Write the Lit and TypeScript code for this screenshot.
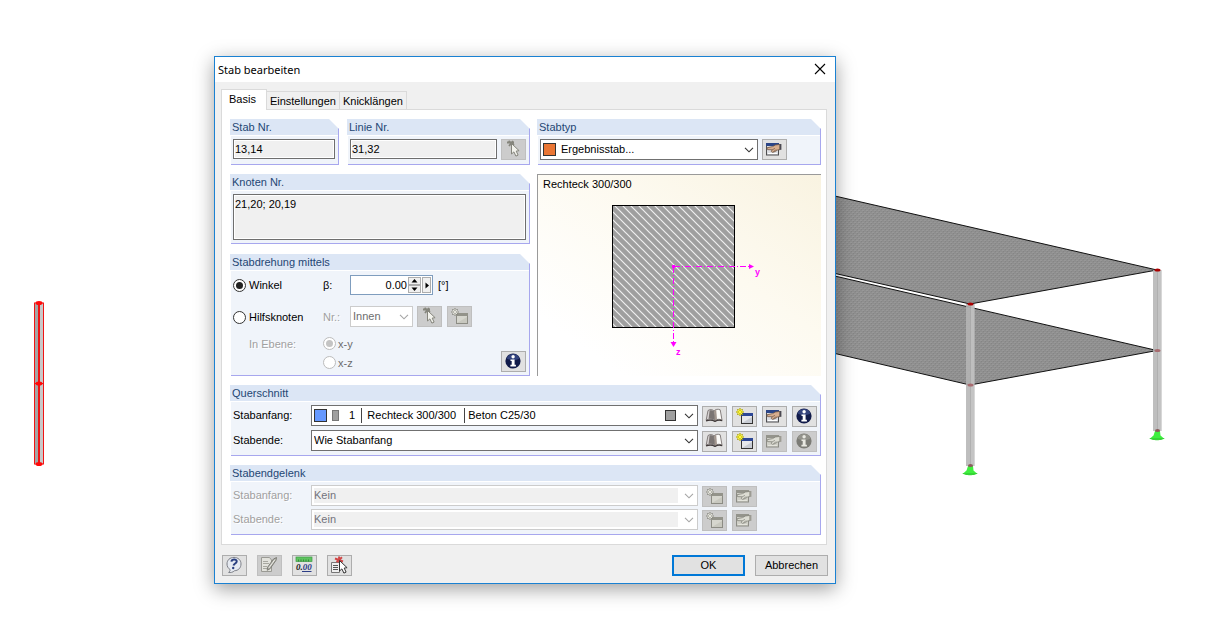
import { LitElement, html, svg, css, nothing, type TemplateResult, type SVGTemplateResult } from "lit";
import { customElement, property, state } from "lit/decorators.js";
import { classMap } from "lit/directives/class-map.js";

type IconName = "pick" | "new" | "edit" | "book" | "info" | "help" | "notes" | "units" | "select";

/* Icons share the 25 x 21 button grid. */
const cursor = (fill: string, stroke: string, x: number, y: number) => svg`
  <path transform="translate(${x} ${y})" d="M0 0 L0 10.5 L2.4 8.4 L4.4 12.6 L6.6 11.6 L4.7 7.6 L7.6 7.2 Z"
    fill=${fill} stroke=${stroke} stroke-width="1" stroke-linejoin="round"/>`;

const spark = (x: number, y: number, fill: string, stroke: string) => svg`
  <g transform="translate(${x} ${y})" stroke-linecap="round">
    <path d="M0 -3.2V3.2M-3.2 0H3.2M-2.2 -2.2L2.2 2.2M2.2 -2.2L-2.2 2.2" stroke=${stroke} stroke-width="1.5"/>
    <path d="M0 -2.8V2.8M-2.8 0H2.8M-1.8 -1.8L1.8 1.8M1.8 -1.8L-1.8 1.8" stroke=${fill} stroke-width="1"/>
  </g>`;

function drawing(name: IconName, off: boolean): SVGTemplateResult {
  switch (name) {
    case "pick":
      return svg`
        <path d="M6 3.5H13M7.5 2L13 6M12 2L8 7" stroke="#85857c" stroke-width="1.8"/>
        ${cursor("#f2f2ec", "#85857c", 10.5, 4.5)}`;
    case "new":
      return svg`
        <rect x="9.5" y="8.5" width="11" height="9" fill=${off ? "#d6d6ce" : "#e6e8ec"} stroke=${off ? "#8c8c84" : "#333"}/>
        <rect x="9" y="7" width="12" height="3" fill=${off ? "#93938a" : "#2c4796"}/>
        <path d="M10 17L20 11V17Z" fill=${off ? "#c8c8bf" : "#c8ccd4"}/>
        ${off ? spark(8, 6, "#e4e4dc", "#85857d") : spark(8, 6, "#fff83c", "#a8a000")}`;
    case "edit":
      return svg`
        <rect x="4.5" y="4.5" width="12" height="11.5" fill=${off ? "#d0d0c8" : "#dcdee3"} stroke=${off ? "#8c8c85" : "#4e4e50"}/>
        <rect x="4" y="4" width="13" height="3" fill=${off ? "#94948c" : "#2b4587"}/>
        <path d="M6 14.5H15" stroke=${off ? "#e4e4dc" : "#fff"}/>
        <path d="M5 8.8 C7 8 9 8.2 10.6 7.6 L13.4 6 L18 5.4 V10.6 L15.6 11 L13.4 12.4 L10.6 13.4 L9.2 12.4 L10.2 10.8 L5.4 10.6 Z"
          fill=${off ? "#dcdcd3" : "#d8ae8e"} stroke=${off ? "#83837a" : "#6d5546"} stroke-width="0.8"/>
        <path d="M10.2 10.8L13 9.4M11.4 12.6L14.4 10.6" stroke=${off ? "#83837a" : "#6d5546"} stroke-width="0.7"/>
        <path d="M17.6 5H19.4V10.8H17.6Z" fill=${off ? "#9c9b93" : "#4a4952"}/>`;
    case "book":
      return svg`
        <path d="M4.2 14L6 4.5C8 3.2 10.4 3.3 12 5L13 14.5C10.4 12.8 7 12.6 4.2 14Z" fill="#d6d2d2" stroke="#6b6463" stroke-width="0.8"/>
        <path d="M7.6 4.4C9.4 3.9 10.8 4.3 11.7 5.3L12.4 13.6C10.6 12.7 8.6 12.5 6.6 12.8Z" fill="#7b7573"/>
        <path d="M12 5C13.4 3.2 16 2.8 18.2 3.8L20 14C17.4 12.9 15 13 13 14.5Z" fill="#fbfaf8" stroke="#6b6463" stroke-width="0.8"/>
        <path d="M12 5L13 14.5L15 13.4L14.2 3.8Z" fill="#a2968e"/>
        <path d="M4 14.9C7.3 13.7 10.5 13.9 13 15.4C15.4 14 18 13.8 20.3 14.8" stroke="#3f3838" stroke-width="1.2"/>`;
    case "info":
      return svg`
        <circle cx="12" cy="10" r="7.6" fill=${off ? "#7c7c76" : "#111b4a"}/>
        <path d="M12 3.1A6.9 6.9 0 0 1 18.4 7.5C14.500 9.500 9.500 9.500 5.600 7.500A6.900 6.900 0 0 1 12 3.100Z" fill=${off ? "#a5a59e" : "#4e62a6"} opacity="0.55"/>
        <circle cx="12.1" cy="5.700" r="1.700" fill=${off ? "#e9e9e2" : "#fff"}/>
        <path d="M9.500 8.500H13.600V13.700H14.900V15.400H9.400V13.700H10.700V10.100H9.500Z" fill=${off ? "#e9e9e2" : "#fff"}/>`;
    case "help":
      return svg`
        <path d="M12 2.4C16 2.4 19 5 19 8.9C19 13 16.2 15.6 12.6 15.7C10.8 17.4 8.6 17.8 6.6 17.4C7.8 16.6 8.2 15.6 8.1 14.6C6.2 13.4 5 11.4 5 9C5 5 8 2.4 12 2.4Z"
          fill="#e6eaf1" stroke="#7d8088"/>
        <path d="M9.4 6.600C9.800 3.900 14.900 3.800 14.700 6.500C14.600 8.500 12 8.500 11.500 10.600" stroke="#2b4080" stroke-width="2"/>
        <circle cx="11.200" cy="13" r="1.200" fill="#2b4080"/>`;
    case "notes":
      return svg`
        <path d="M4.5 2.5H12.5L14.5 5V16.5H4.5Z" fill="#e2e2dc" stroke="#9a9a94"/>
        <path d="M6 6.500H11M6 8.500H12M6 11.500H10M6 13.500H12" stroke="#98988f" stroke-width="0.8"/>
        <path d="M19.5 2.5L16.5 4L10.6 12.2L10.2 15.3L13 13.8L19 5.3Z" fill="#aaaaa3" stroke="#77776f" stroke-width="0.9"/>
        <path d="M18 4.5L11.8 13" stroke="#efefe9"/>`;
    case "units":
      return svg`
        <rect x="4" y="2" width="16" height="4.5" fill="#5fc45f" stroke="#3c9a45" stroke-width="0.7"/>
        <path d="M6.5 4.500V6.500M9 4.500V6.500M11.500 4.500V6.500M14 4.500V6.500M16.500 4.500V6.500" stroke="#2b7b34" stroke-width="0.8"/>
        <text x="4" y="15" class="digits" fill="#222">0.<tspan fill="#2c3d86">00</tspan></text>
        <path d="M10 16.500H19.500" stroke="#2c3d86"/>`;
    case "select":
      return svg`
        <path d="M4.5 7.5H12.5V17.5H4.5Z" fill="#efefef" stroke="#777"/>
        <path d="M6 10.5H11M6 12.5H11M6 14.5H11" stroke="#555"/>
        <path d="M8 3.500L16 6.500M9.500 7L15 2.200M12 1.500L12.500 8" stroke="#d04545" stroke-width="1.900"/>
        ${cursor("#fff", "#333", 12.5, 5.5)}`;
  }
}

const icon = (name: IconName, off = false) => html`
  <svg class="icon" viewBox="1 1 23 19" width="23" height="19" fill="none" aria-hidden="true">${drawing(name, off)}</svg>`;

const tool = (name: IconName, label: string, off = false) => html`
  <button class="tool" type="button" aria-label=${label} title=${label} ?disabled=${off}>${icon(name, off)}</button>`;

const chevron = html`
  <svg class="chevron" viewBox="0 0 10 6" width="10" height="6" fill="none" aria-hidden="true">
    <path d="M1 0.8L5 4.8L9 0.8" stroke="currentColor" stroke-width="1.1"/>
  </svg>`;

/* Titled box with a cut top right corner. */
@customElement("group-box")
export class GroupBox extends LitElement {
  @property() heading = "";

  static styles = css`
    :host { display: flex; flex-direction: column; min-width: 0; }
    .head {
      margin: 0; box-sizing: border-box; height: 16px; padding: 0 2px;
      font-size: 11px; font-weight: 400; line-height: 17px; color: #1f4674;
      background: #dce6f5; border-right: 1px solid #a7a7ee;
      clip-path: polygon(0 0, calc(100% - 10px) 0, 100% 10px, 100% 100%, 0 100%);
    }
    .body {
      flex: 1; margin-left: 1px; padding: 4px 3px 3px 2px;
      background: #f0f4fa; border: solid #a7a7ee; border-width: 0 1px 1px 0;
      box-shadow: inset 0 1px #fff;
    }
  `;

  render() {
    return html`<h2 class="head">${this.heading}</h2><div class="body"><slot></slot></div>`;
  }
}

/* 3D view of the structural model behind the dialog. */
@customElement("model-view")
export class ModelView extends LitElement {
  static styles = css`
    :host { display: block; }
    svg { display: block; width: 100%; height: 100%; }
  `;

  private column(x: number, top: number, mid: number, foot: number) {
    return svg`
      <path d="M${x - 2} ${foot}h5l0.5 4.500l4 3.500h-15l4 -3.500z" fill="#3fef3f"/>
      <path d="M${x - 7.5} ${foot + 7}h15c-1 3 -14 3 -15 0z" fill="#36d636"/>
      <rect x=${x - 4} y=${top} width="8.5" height=${foot - top} fill="#b5b5b5" fill-opacity="0.88"/>
      <path d="M${x + 2.5} ${top}V${foot}" stroke="#c8c8c8" stroke-width="4" opacity="0.6"/>
      <path d="M${x + 0.5} ${top}V${foot}" stroke="#989898" stroke-width="1" opacity="0.4"/>
      <ellipse cx=${x + 0.5} cy=${top} rx="3" ry="1.6" fill="#a00"/>
      <ellipse cx=${x + 0.5} cy=${mid} rx="3" ry="1.6" fill="#a86b6f"/>
      <ellipse cx=${x + 0.5} cy=${foot - 0.5} rx="2.5" ry="1.6" fill="#8a5c5c"/>`;
  }

  render() {
    return html`
      <svg viewBox="0 0 1206 620" preserveAspectRatio="xMinYMin slice" role="img" aria-label="Modell">
        <defs>
          <pattern id="mesh" width="4" height="4" patternUnits="userSpaceOnUse">
            <rect width="4" height="4" fill="#8f8f8f"/>
            <path d="M0 0.5H2M2 2.5H4" stroke="#989898"/>
            <path d="M1 1.5H2M3 3.5H4" stroke="#858585"/>
          </pattern>
        </defs>
        <path d="M800 268L1157 350.5L970 385L800 345.3Z" fill="url(#mesh)"/>
        <path d="M800 268L1157 350.5L970 385L800 345.3" fill="none" stroke="#111"/>
        <path d="M800 188L1157 270L970 304L800 265.5Z" fill="url(#mesh)"/>
        <path d="M800 188L1157 270L970 304L800 265.5" fill="none" stroke="#111"/>
        ${this.column(970, 304, 385, 466)} ${this.column(1157, 270, 350.5, 431)}
        <rect x="34.5" y="303" width="9" height="161" fill="#c9c9c9" stroke="#f01414"/>
        <rect x="35" y="303.5" width="4" height="160" fill="#a5a5a5"/>
        <path d="M39 302V465" stroke="#f01414" stroke-width="2"/>
        <path d="M34 383.5H44" stroke="#f01414"/>
        <g fill="#ff0a0a">
          <ellipse cx="39" cy="303" rx="3.5" ry="2"/>
          <ellipse cx="39" cy="383.5" rx="3.5" ry="2"/>
          <ellipse cx="39" cy="464" rx="3.5" ry="2"/>
        </g>
      </svg>`;
  }
}

@customElement("app-root")
export class AppRoot extends LitElement {
  @state() private tab = 0;

  static styles = css`
    :host {
      display: block; position: relative; min-height: 100vh; overflow: hidden;
      background: #fff; color: #000;
      font-family: "Liberation Sans", Arial, sans-serif; font-size: 11px; line-height: 20px;
    }
    *, *::before { box-sizing: border-box; }
    .scene { position: absolute; inset: 0; }

    .dialog {
      position: absolute; left: 214px; top: 56px; width: 622px; max-width: 100%;
      background: #f0f0f0; border: 1px solid #1a81d2;
      box-shadow: 0 5px 18px rgba(0, 0, 0, 0.38);
    }
    .titlebar {
      display: flex; align-items: center; justify-content: space-between;
      height: 25px; padding: 0 8px 0 3px; background: #fff;
    }
    .title { margin: 0; font: 400 11px/24px "Noto Sans", "Open Sans", sans-serif; }
    button, input, select, textarea { font: inherit; color: inherit; margin: 0; border-radius: 0; }
    .close { width: 14px; height: 24px; padding: 0; border: 0; background: none; display: grid; place-items: center; align-self: flex-start; }

    .tabs { display: flex; align-items: flex-end; height: 20px; margin: 7px 8px 0 6px; }
    .tab {
      height: 18px; padding: 0 3px; line-height: 18px;
      background: #f0f0f0; border: 1px solid #dadada; border-width: 1px 1px 0 0;
    }
    .tab.on {
      position: relative; height: 21px; margin-bottom: -1px; padding: 0 10px 2px 7px;
      background: #fff; border-left-width: 1px;
    }
    .sheet {
      display: flex; flex-direction: column; gap: 9px; margin: 0 8px 0 6px;
      padding: 9px 5px 9px 8px; background: #fff; border: 1px solid #dadada;
    }
    .split { display: grid; grid-template-columns: 300fr 284fr; gap: 7px; }
    .numbers { display: grid; grid-template-columns: 109fr 183fr; gap: 8px; }
    .stack { display: flex; flex-direction: column; gap: 10px; }

    .line { display: flex; align-items: flex-start; gap: 4px; height: 22px; }
    .rows { display: flex; flex-direction: column; gap: 3px; }
    .rows.tight { gap: 2px; }
    .rows .tool { align-self: flex-end; }
    .rows .tool + .tool { margin-left: 1px; }
    .caption { flex: 0 0 74px; }
    .spare { flex: 0 0 26px; }
    .spare.double { flex-basis: 56px; }

    .well {
      display: block; width: 100%; min-width: 0; height: 20px; padding: 0 1px; line-height: 16px;
      background: #f0f0f0; border: 1px solid #6e6e6e; box-shadow: inset 0 0 0 1px #fff; outline: 0;
    }
    textarea.well { height: 46px; padding: 1px; resize: none; }

    .tool {
      flex: none; display: grid; place-items: center; width: 25px; height: 21px; padding: 0;
      background: #e1e1e1; border: 1px solid #adadad;
    }
    .tool:disabled { background: #ccc; border-color: #bfbfbf; }
    .icon { display: block; }
    .digits { font: italic bold 9px "Liberation Serif", serif; }

    .combo { position: relative; flex: 1; min-width: 0; height: 21px; }
    .combo select {
      appearance: none; display: block; width: 100%; height: 21px; padding: 0 20px 0 2px;
      line-height: 19px; background: #fff; border: 1px solid #707070; outline: 0; opacity: 1;
    }
    .combo select:disabled { color: #6d6d6d; border-color: #ccc; }
    .combo .filled:disabled { background: #f0f0f0; box-shadow: inset 0 0 0 2px #fff, inset -19px 0 #fff; color: #73737c; }
    .combo .swatched { padding-left: 20px; }
    .combo .section { padding-left: 37px; }
    .chevron { position: absolute; right: 4px; top: 8px; color: #333; pointer-events: none; }
    .combo select:disabled ~ .chevron { color: #a5a5a5; }
    .swatch { position: absolute; top: 4px; width: 13px; height: 13px; border: 1px solid #333; pointer-events: none; }
    .swatch.type { left: 3px; background: #ea7634; }
    .swatch.color { left: 3px; background: #6699ff; }
    .swatch.shape { left: 21px; top: 5px; width: 7px; height: 11px; background: #a0a0a0; border-color: #777; }
    .swatch.material { right: 22px; top: 5px; width: 11px; height: 11px; background: #a0a0a0; }
    .rule { position: absolute; top: 3px; width: 1px; height: 15px; background: #444; pointer-events: none; }
    .rule.first { left: 50px; }
    .rule.second { left: 153px; }

    .choice { display: flex; align-items: center; gap: 3px; }
    input[type="radio"] {
      appearance: none; flex: none; width: 13px; height: 13px; border: 1px solid #333; border-radius: 50%;
      background: #fff; display: grid; place-items: center;
    }
    input[type="radio"]:checked::before { content: ""; width: 7px; height: 7px; border-radius: 50%; background: #222; }
    input[type="radio"]:disabled { border-color: #bcbcbc; }
    input[type="radio"]:disabled:checked::before { background: #c4c4c4; }
    .muted { color: #a0a0a0; text-shadow: 1px 1px #fff; }
    .dim { color: #6d6d6d; gap: 2px; }

    .rotation { display: flex; flex-direction: column; }
    .rotation .line { align-items: center; gap: 0; }
    .rotation .aux { align-items: flex-end; margin-top: 9px; }
    .wide { flex: 0 0 90px; }
    .narrow { flex: 0 0 27px; }
    .short { flex: 0 0 63px; }
    .rotation .tool { margin-left: 4px; }
    .aux .tool + .tool { margin-left: 5px; }
    .plane { display: flex; margin-top: 7px; }
    .plane .wide { padding-left: 16px; }
    .plane .choice { height: 19px; }
    .plane .tool { margin: auto 0 0 auto; }

    .spin { display: flex; align-items: center; gap: 1px; width: 83px; height: 20px; padding: 0 1px; background: #fff; border: 1px solid #7f9dbe; }
    .value { flex: 1; min-width: 0; height: 18px; padding: 0; border: 0; background: none; text-align: right; outline: 0; }
    .steps { display: flex; flex-direction: column; width: 13px; height: 16px; }
    .step, .more { flex: 1; display: grid; place-items: center; padding: 0; background: #f0f0f0; border: 1px solid #adadad; }
    .more { flex: 0 0 9px; height: 16px; }
    .unit { padding-left: 5px; }

    .preview {
      margin: 0; overflow: hidden; border: solid #9a9a9a; border-width: 1px 0 0 1px;
      background: linear-gradient(to top right, #fff 15%, #fdfaf0 60%, #f9f3e1);
    }
    .preview figcaption { height: 18px; padding-left: 5px; line-height: 18px; }
    .preview svg { display: block; }
    .axis { font: bold 9px "Liberation Sans", sans-serif; }

    .footer { display: flex; justify-content: space-between; padding: 10px 7px 7px 7px; }
    .group { display: flex; gap: 10px; }
    .action { width: 73px; height: 21px; padding: 0; line-height: 19px; background: #e1e1e1; border: 1px solid #adadad; }
    .action.primary { border: 2px solid #0078d7; line-height: 17px; }
  `;

  private combo(id: string, text: string, opts: { disabled?: boolean; cls?: string; extra?: TemplateResult } = {}) {
    return html`
      <div class="combo">
        <select id=${id} class=${opts.cls ?? ""} ?disabled=${opts.disabled ?? false}>
          <option>${text}</option>
        </select>
        ${opts.extra ?? nothing}${chevron}
      </div>`;
  }

  private rotation() {
    return html`
      <div class="rotation">
        <div class="line">
          <label class="choice wide"><input type="radio" name="mode" checked />Winkel</label>
          <label class="narrow" for="beta">β:</label>
          <div class="spin">
            <input class="value" id="beta" value="0.00" />
            <div class="steps">
              <button class="step" aria-label="Mehr"><svg width="7" height="4"><path d="M3.5 0L6.5 3.5H0.5Z"/></svg></button>
              <button class="step" aria-label="Weniger"><svg width="7" height="4"><path d="M3.5 4L6.5 0.5H0.5Z"/></svg></button>
            </div>
            <button class="more" aria-label="Auswahl"><svg width="4" height="7"><path d="M0.5 0.5L4 3.5L0.5 6.5Z"/></svg></button>
          </div>
          <span class="unit">[°]</span>
        </div>
        <div class="line aux">
          <label class="choice wide"><input type="radio" name="mode" />Hilfsknoten</label>
          <label class="narrow muted" for="innen">Nr.:</label>
          <div class="short">${this.combo("innen", "Innen", { disabled: true })}</div>
          ${tool("pick", "Knoten wählen", true)} ${tool("new", "Neuer Knoten", true)}
        </div>
        <div class="plane">
          <span class="wide muted">In Ebene:</span>
          <div>
            <label class="choice dim"><input type="radio" name="plane" checked disabled />x-y</label>
            <label class="choice dim"><input type="radio" name="plane" disabled />x-z</label>
          </div>
          ${tool("info", "Info")}
        </div>
      </div>`;
  }

  private preview() {
    return html`
      <figure class="preview">
        <figcaption>Rechteck 300/300</figcaption>
        <svg viewBox="0 0 283 183" width="283" height="183" aria-hidden="true">
          <defs>
            <pattern id="hatch" width="8" height="8" patternUnits="userSpaceOnUse">
              <rect width="8" height="8" fill="#9f9f9f"/>
              <path d="M-1 -1L9 9M7 -1L9 1M-1 7L1 9" stroke="#f0f0f0" stroke-width="1.2"/>
            </pattern>
          </defs>
          <rect x="74.5" y="12.5" width="122" height="122" fill="url(#hatch)" stroke="#000"/>
          <g stroke="#ff00ff" fill="none" stroke-dasharray="6 2 1 2">
            <path d="M136 73.5H212"/><path d="M135.5 74V149"/>
          </g>
          <g fill="#ff00ff">
            <rect x="134" y="72" width="3" height="3"/>
            <path d="M211 71L216 73.5L211 76Z"/><path d="M132.5 149H138.5L135.5 154Z"/>
            <text class="axis" x="217" y="82">y</text><text class="axis" x="138" y="162">z</text>
          </g>
        </svg>
      </figure>`;
  }

  render() {
    const sp = "\u00a0";
    const section = `1${sp.repeat(4)}Rechteck 300/300${sp.repeat(4)}Beton C25/30`;
    const names = ["Basis", "Einstellungen", "Knicklängen"];
    return html`
      <model-view class="scene"></model-view>
      <section class="dialog" role="dialog" aria-label="Stab bearbeiten">
        <header class="titlebar">
          <h1 class="title">Stab bearbeiten</h1>
          <button class="close" aria-label="Schließen">
            <svg width="12" height="12"><path d="M1 1L11 11M11 1L1 11" stroke="#000" stroke-width="1.1"/></svg>
          </button>
        </header>
        <div class="tabs" role="tablist">
          ${names.map((n, i) => html`
            <button role="tab" aria-selected=${i === this.tab} class=${classMap({ tab: true, on: i === this.tab })}
              @click=${() => (this.tab = i)}>${n}</button>`)}
        </div>
        <div class="sheet">
          <div class="split">
            <div class="numbers">
              <group-box heading="Stab Nr.">
                <div class="line"><input class="well" aria-label="Stab Nr." value="13,14" readonly /></div>
              </group-box>
              <group-box heading="Linie Nr.">
                <div class="line"><input class="well" aria-label="Linie Nr." value="31,32" readonly />${tool("pick", "Linie wählen", true)}</div>
              </group-box>
            </div>
            <group-box heading="Stabtyp">
              <div class="line">
                <div class="combo">
                  <select class="swatched" aria-label="Stabtyp"><option>Ergebnisstab...</option></select>
                  <span class="swatch type"></span>${chevron}
                </div>
                ${tool("edit", "Bearbeiten")}<span class="spare"></span>
              </div>
            </group-box>
          </div>
          <div class="split">
            <div class="stack">
              <group-box heading="Knoten Nr.">
                <textarea class="well" aria-label="Knoten Nr." readonly>21,20; 20,19</textarea>
              </group-box>
              <group-box heading="Stabdrehung mittels">${this.rotation()}</group-box>
            </div>
            ${this.preview()}
          </div>
          <group-box heading="Querschnitt">
            <div class="rows">
              <div class="line">
                <label class="caption" for="q-anfang">Stabanfang:</label>
                ${this.combo("q-anfang", section, {
                  cls: "section",
                  extra: html`<span class="swatch color"></span><span class="swatch shape"></span>
                    <span class="rule first"></span><span class="rule second"></span><span class="swatch material"></span>`,
                })}
                ${tool("book", "Bibliothek")} ${tool("new", "Neu")} ${tool("edit", "Bearbeiten")} ${tool("info", "Info")}
              </div>
              <div class="line">
                <label class="caption" for="q-ende">Stabende:</label>
                ${this.combo("q-ende", "Wie Stabanfang")}
                ${tool("book", "Bibliothek")} ${tool("new", "Neu")} ${tool("edit", "Bearbeiten", true)} ${tool("info", "Info", true)}
              </div>
            </div>
          </group-box>
          <group-box heading="Stabendgelenk">
            <div class="rows tight">
              ${["Stabanfang:", "Stabende:"].map((label, i) => html`
                <div class="line">
                  <label class="caption muted" for="g-${i}">${label}</label>
                  ${this.combo(`g-${i}`, "Kein", { disabled: true, cls: "filled" })}
                  ${tool("new", "Neu", true)} ${tool("edit", "Bearbeiten", true)}
                  <span class="spare double"></span>
                </div>`)}
            </div>
          </group-box>
        </div>
        <footer class="footer">
          <div class="group">
            ${tool("help", "Hilfe")} ${tool("notes", "Kommentar", true)} ${tool("units", "Einheiten")} ${tool("select", "Auswahl")}
          </div>
          <div class="group">
            <button class="action primary">OK</button>
            <button class="action">Abbrechen</button>
          </div>
        </footer>
      </section>`;
  }
}
